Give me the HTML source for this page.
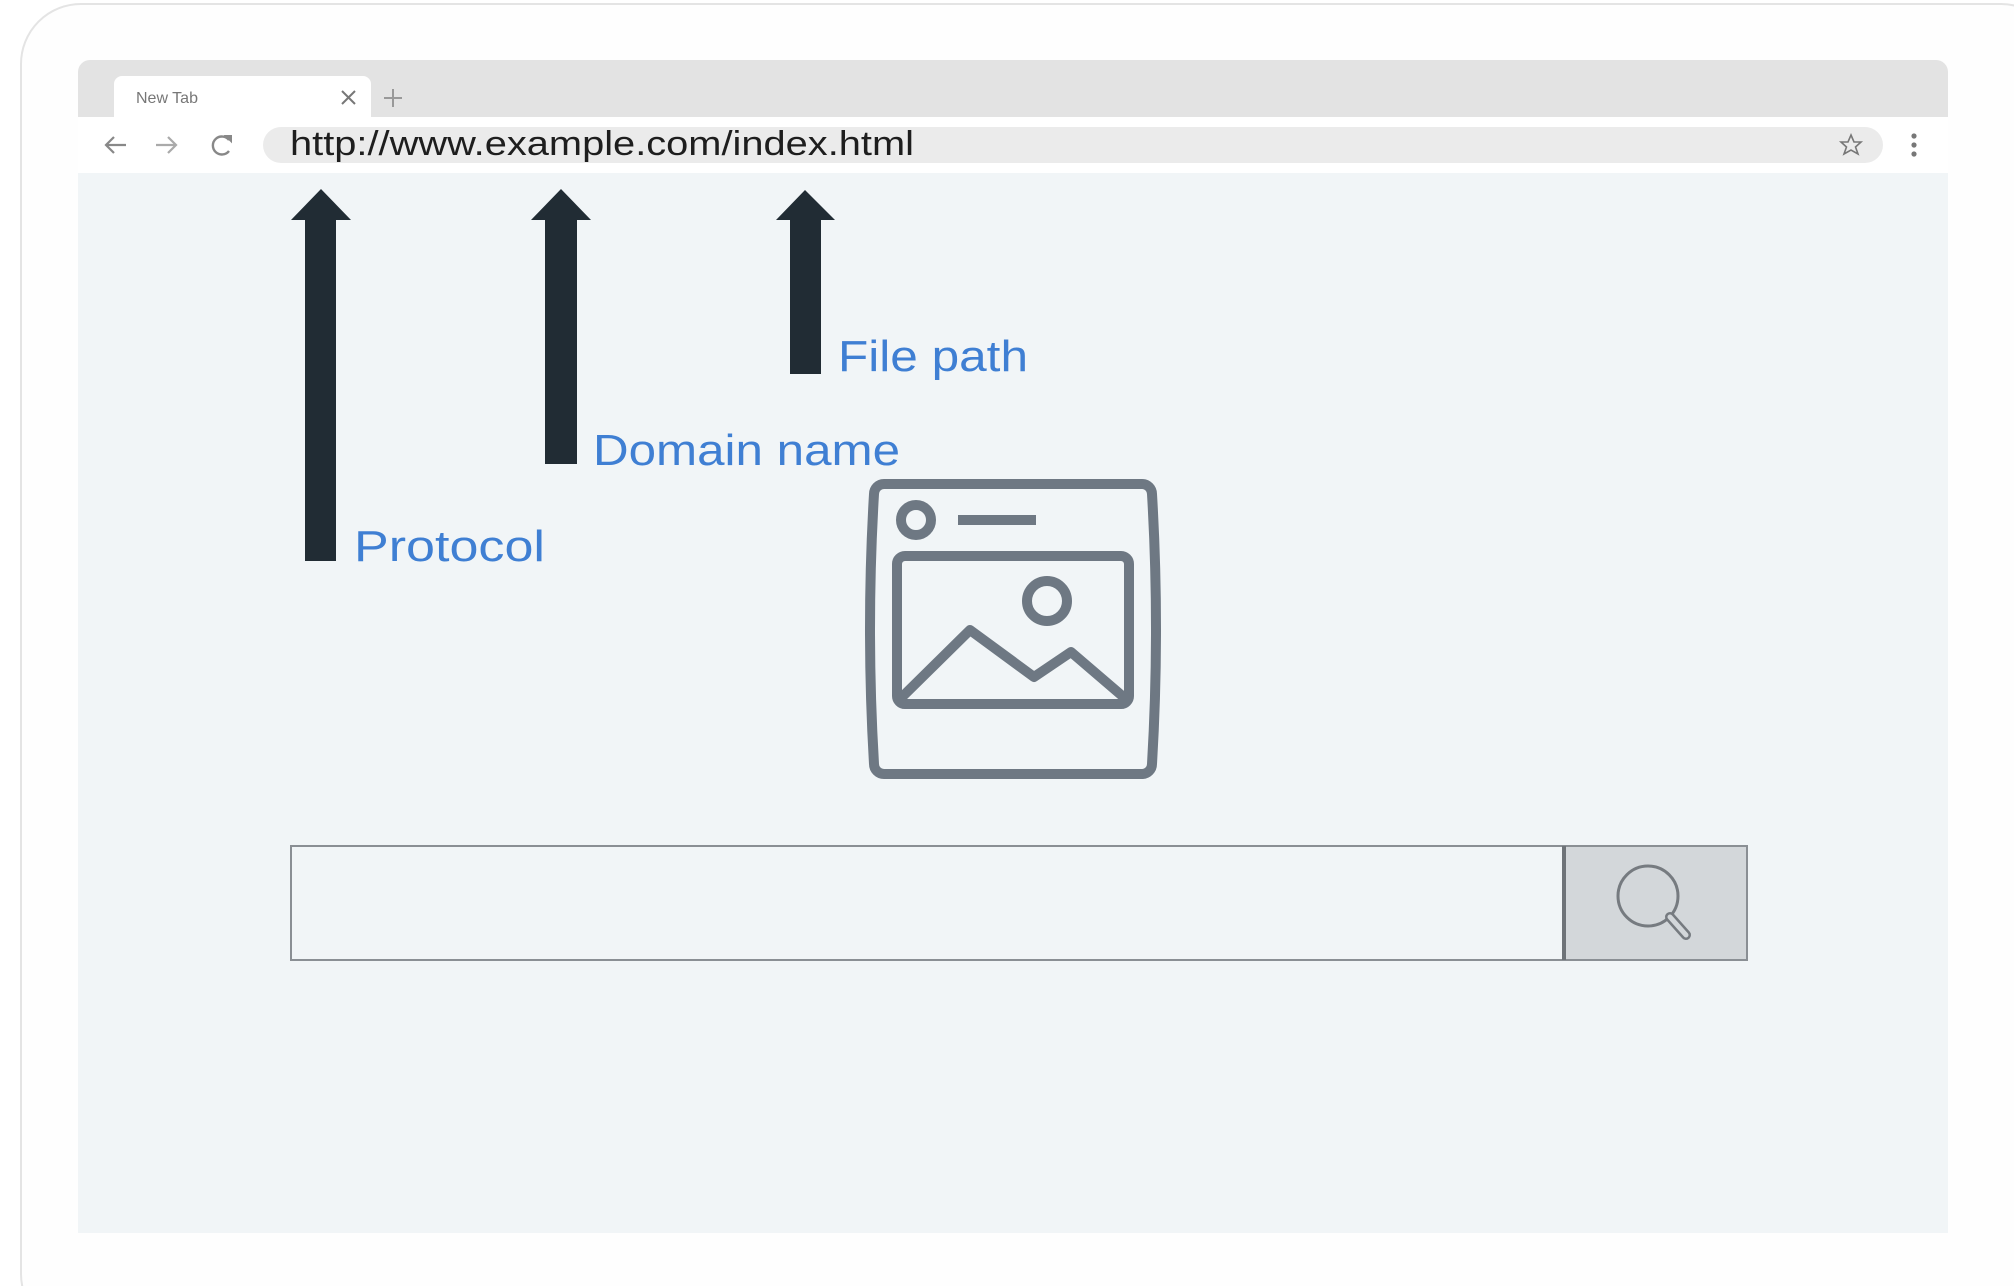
<!DOCTYPE html>
<html><head><meta charset="utf-8"><style>
html,body{margin:0;padding:0;background:#fff;width:2014px;height:1286px;overflow:hidden}
svg{display:block}
</style></head><body>
<svg width="2014" height="1286" viewBox="0 0 2014 1286" xmlns="http://www.w3.org/2000/svg">
<rect x="0" y="0" width="2014" height="1286" fill="#fff"/>
<rect x="21" y="4" width="2040" height="1330" rx="60" fill="#fefefe" stroke="#e4e4e4" stroke-width="2"/>
<path d="M78 117 V72 a12 12 0 0 1 12 -12 H1936 a12 12 0 0 1 12 12 V117 Z" fill="#e3e3e3"/>
<path d="M114 117 V84 a8 8 0 0 1 8 -8 H363 a8 8 0 0 1 8 8 V117 Z" fill="#fff"/>
<text x="136" y="103" font-family="Liberation Sans, sans-serif" font-size="16" fill="#777">New Tab</text>
<path d="M342 91 L355 104 M355 91 L342 104" stroke="#777" stroke-width="2"/>
<path d="M393 89 V107 M384 98 H402" stroke="#999" stroke-width="2"/>
<rect x="78" y="117" width="1870" height="56" fill="#fff"/>
<path d="M106 145 H126 M114 137 L106 145 L114 153" stroke="#888" stroke-width="2.2" fill="none"/>
<path d="M156 145 H176 M168 137 L176 145 L168 153" stroke="#aaa" stroke-width="2.2" fill="none"/>
<path d="M229 140 A9 9 0 1 0 229 151" stroke="#888" stroke-width="2.4" fill="none"/>
<path d="M226 136 L231 136 L231 141 Z" fill="#888" stroke="#888" stroke-width="2"/>
<rect x="263" y="127" width="1620" height="36" rx="18" fill="#ebebeb"/>
<text x="290" y="155" font-family="Liberation Sans, sans-serif" font-size="34" fill="#1e1e1e" textLength="624" lengthAdjust="spacingAndGlyphs">http://www.example.com/index.html</text>
<path d="M1851 135 L1854 142 L1861 142 L1855.5 147 L1858 154 L1851 150 L1844 154 L1846.5 147 L1841 142 L1848 142 Z" fill="none" stroke="#777" stroke-width="1.6"/>
<circle cx="1914" cy="136" r="2.6" fill="#777"/><circle cx="1914" cy="145" r="2.6" fill="#777"/><circle cx="1914" cy="154" r="2.6" fill="#777"/>
<rect x="78" y="173" width="1870" height="1060" fill="#f1f5f7"/>
<g fill="#212c34">
<path d="M321 189 L351 220 H336 V561 H305 V220 H291 Z"/>
<path d="M561 189 L591 220 H577 V464 H545 V220 H531 Z"/>
<path d="M805 190 L835 220 H821 V374 H790 V220 H776 Z"/>
</g>
<g font-family="Liberation Sans, sans-serif" font-size="44" fill="#3f7fd3">
<text x="354" y="561" textLength="191" lengthAdjust="spacingAndGlyphs">Protocol</text>
<text x="593" y="465" textLength="307" lengthAdjust="spacingAndGlyphs">Domain name</text>
<text x="838" y="371" textLength="190" lengthAdjust="spacingAndGlyphs">File path</text>
</g>
<g fill="none" stroke="#6e7883" stroke-width="10" stroke-linejoin="round" stroke-linecap="round">
<path d="M884 484 H1142 a10 10 0 0 1 10 10 Q1160 629 1152 764 a10 10 0 0 1 -10 10 H884 a10 10 0 0 1 -10 -10 Q866 629 874 494 a10 10 0 0 1 10 -10 Z"/>
<circle cx="916" cy="520" r="15"/>
<path d="M958 520 H1036" stroke-linecap="butt"/>
<rect x="897" y="556" width="232" height="148" rx="8"/>
<circle cx="1047" cy="601" r="20"/>
<path d="M899 700 L970 630 L1034 677 L1071 652 L1127 700"/>
</g>
<rect x="291" y="846" width="1273" height="114" fill="#f1f5f7" stroke="#8a8f94" stroke-width="2"/>
<rect x="1564" y="846" width="183" height="114" fill="#d3d7da" stroke="#8a8f94" stroke-width="2"/>
<line x1="1564" y1="846" x2="1564" y2="960" stroke="#6e7378" stroke-width="4"/>
<circle cx="1648" cy="896" r="30" fill="none" stroke="#767b80" stroke-width="3"/>
<path d="M1670 917 L1686 935" stroke="#767b80" stroke-width="10" stroke-linecap="round"/>
<path d="M1670 917 L1686 935" stroke="#d3d7da" stroke-width="5" stroke-linecap="round"/>
</svg>
</body></html>
